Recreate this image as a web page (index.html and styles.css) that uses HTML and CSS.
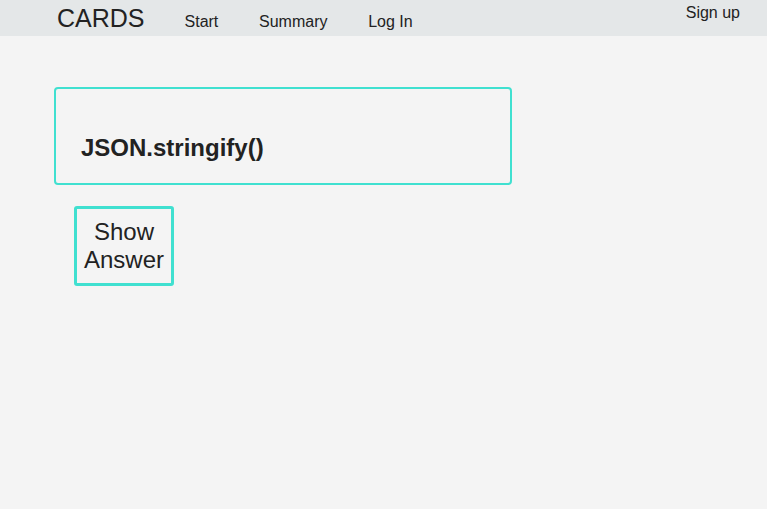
FILE: index.html
```html
<!DOCTYPE html>
<html>
<head>
<meta charset="utf-8">
<link rel="stylesheet" href="styles.css">
</head>
<body>
<nav class="nav">
  <span class="brand">CARDS</span>
  <a class="link" href="#">Start</a>
  <a class="link" href="#">Summary</a>
  <a class="link" href="#">Log In</a>
  <a class="signup" href="#">Sign up</a>
</nav>
<main class="main">
  <div class="card"><h3 class="question">JSON.stringify()</h3></div>
  <button class="show">Show<br>Answer</button>
</main>
</body>
</html>
```
FILE: styles.css
```css
html, body {
  margin: 0;
  padding: 0;
  background: #f4f4f4;
  font-family: "Liberation Sans", Arial, sans-serif;
  color: #222;
}
.nav {
  display: flex;
  align-items: baseline;
  height: 36px;
  padding: 0 27px 0 57px;
  background: #e4e7e8;
}
.brand {
  font-size: 25px;
  line-height: 36px;
  margin-right: 40px;
}
.link {
  font-size: 16px;
  color: #222;
  text-decoration: none;
  margin-right: 40.7px;
}
.signup {
  margin-left: auto;
  align-self: flex-start;
  font-size: 16px;
  line-height: 16px;
  padding-top: 4.5px;
  color: #222;
  text-decoration: none;
}
.main {
  display: flex;
  flex-direction: column;
  align-items: flex-start;
  padding: 51px 0 0 54px;
}
.card {
  box-sizing: border-box;
  width: 458px;
  border: 2px solid #40e0d0;
  border-radius: 4px;
  padding: 45px 25px 21px 25px;
}
.question {
  margin: 0;
  font-size: 24px;
  line-height: 28px;
  font-weight: bold;
}
.show {
  margin: 21px 0 0 20px;
  box-sizing: border-box;
  width: 100px;
  height: 80px;
  border: 3px solid #40e0d0;
  border-radius: 3px;
  background: transparent;
  font-family: "Liberation Sans", Arial, sans-serif;
  font-size: 24px;
  line-height: 28px;
  color: #222;
  padding: 0;
  text-align: center;
}
```
